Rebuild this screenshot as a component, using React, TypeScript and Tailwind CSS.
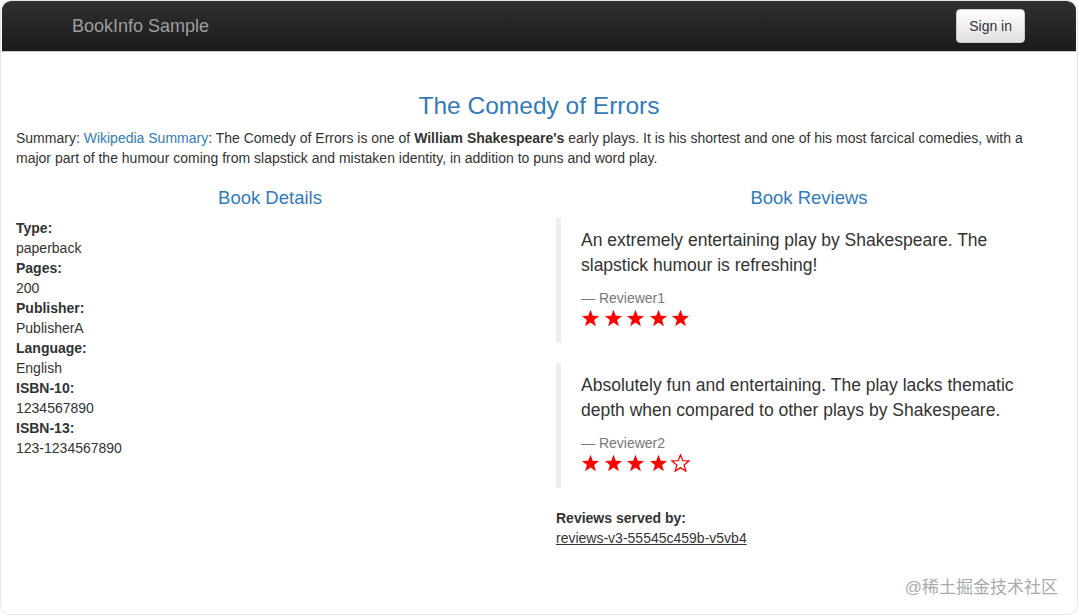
import React from "react";

const details: [string, string][] = [
  ["Type:", "paperback"],
  ["Pages:", "200"],
  ["Publisher:", "PublisherA"],
  ["Language:", "English"],
  ["ISBN-10:", "1234567890"],
  ["ISBN-13:", "123-1234567890"],
];

const reviews = [
  {
    text: "An extremely entertaining play by Shakespeare. The slapstick humour is refreshing!",
    who: "Reviewer1",
    stars: 5,
  },
  {
    text: "Absolutely fun and entertaining. The play lacks thematic depth when compared to other plays by Shakespeare.",
    who: "Reviewer2",
    stars: 4,
  },
];

function Star({ filled }: { filled: boolean }) {
  return (
    <svg width="19" height="18" viewBox="0 0 24 23" className="shrink-0">
      <polygon
        points="12,1 14.9,8.6 23,8.9 16.6,14 18.9,22 12,17.4 5.1,22 7.4,14 1,8.9 9.1,8.6"
        fill={filled ? "#ff0000" : "none"}
        stroke="#ff0000"
        strokeWidth={filled ? 0 : 1.6}
        strokeLinejoin="miter"
      />
    </svg>
  );
}

export default function App() {
  return (
    <div className="w-[1078px] h-[615px] bg-white font-['Liberation_Sans',Arial,sans-serif] text-[#333]">
      <div className="w-full h-full border border-[#e6e6e6] rounded-[10px] overflow-hidden relative">
        {/* navbar */}
        <div className="mx-[1px] h-[51px] rounded-t-[9px] bg-gradient-to-b from-[#303030] to-[#1b1b1b] border-b border-[#c8c8c8] flex items-center justify-between pl-[70px] pr-[51px]">
          <span className="text-[18px] text-[#9d9d9d] leading-5">BookInfo Sample</span>
          <button className="h-[34px] px-3 rounded-[4px] border border-[#ccc] bg-gradient-to-b from-white to-[#e0e0e0] text-[14px] text-[#333]">
            Sign in
          </button>
        </div>

        <div className="px-[15px]">
          <h1 className="text-center text-[24.5px] leading-[26px] text-[#337ab7] mt-[41px] mb-[9px]">The Comedy of Errors</h1>
          <p className="text-[14px] leading-5 pr-[20px]">
            Summary: <a className="text-[#337ab7]">Wikipedia Summary</a>: The Comedy of Errors is one of{" "}
            <b>William Shakespeare's</b> early plays. It is his shortest and one of his most farcical comedies, with a
            major part of the humour coming from slapstick and mistaken identity, in addition to puns and word play.
          </p>

          <div className="grid grid-cols-2 mx-[-15px] mt-[20px]">
            <div className="px-[15px]">
              <h4 className="text-center text-[18.5px] leading-5 text-[#337ab7] mb-[10px]">Book Details</h4>
              <dl className="text-[14px] leading-5">
                {details.map(([k, v]) => (
                  <React.Fragment key={k}>
                    <dt className="font-bold">{k}</dt>
                    <dd>{v}</dd>
                  </React.Fragment>
                ))}
              </dl>
            </div>

            <div className="pl-[17px] pr-[15px]">
              <h4 className="text-center text-[18.5px] leading-5 text-[#337ab7] mb-[10px]">Book Reviews</h4>
              {reviews.map(r => (
                <blockquote key={r.who} className="border-l-[5px] border-[#eee] pl-5 pr-5 pt-[10px] pb-[10px] mb-5 h-[125px]">
                  <p className="text-[17.5px] leading-[25px]">{r.text}</p>
                  <div className="text-[14px] leading-5 text-[#777] mt-[10px]">— {r.who}</div>
                  <div className="flex gap-[3.5px] mt-[1px]">
                    {[0, 1, 2, 3, 4].map(i => (
                      <Star key={i} filled={i < r.stars} />
                    ))}
                  </div>
                </blockquote>
              ))}
              <div className="text-[14px] leading-5">
                <div className="font-bold">Reviews served by:</div>
                <a className="underline">reviews-v3-55545c459b-v5vb4</a>
              </div>
            </div>
          </div>
        </div>

        <div className="absolute right-[19px] bottom-[14px] text-[17px] text-[#aaa] font-['Liberation_Sans','Noto_Sans_CJK_SC',sans-serif]">
          @稀土掘金技术社区
        </div>
      </div>
    </div>
  );
}
